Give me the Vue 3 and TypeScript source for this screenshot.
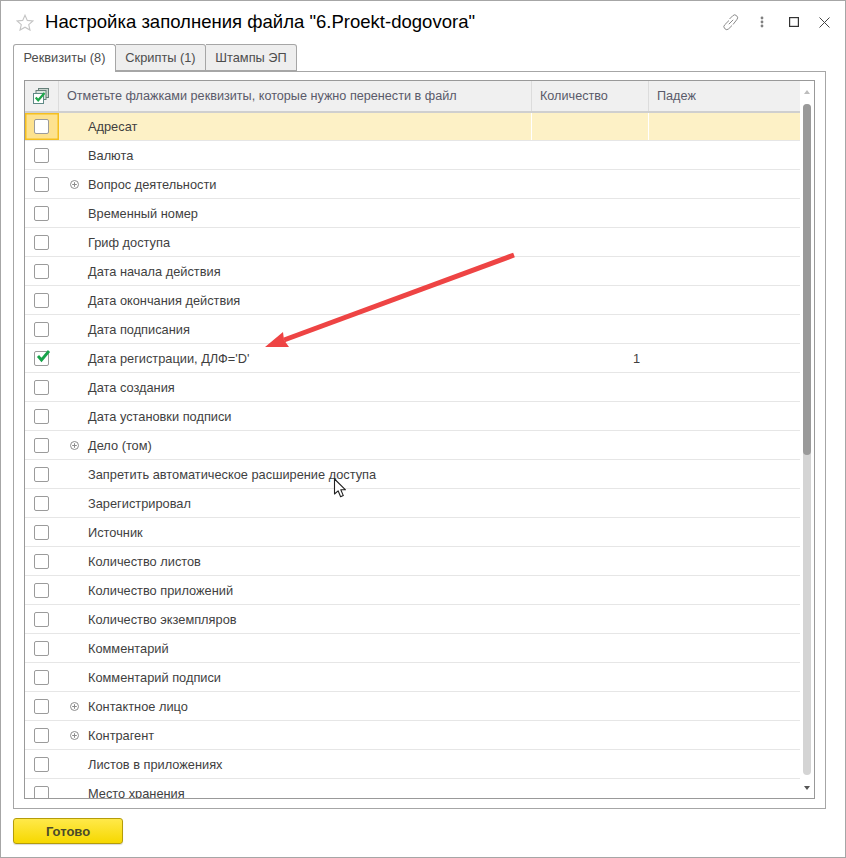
<script setup lang="ts">
interface Row { name: string; expand?: boolean; checked?: boolean; qty?: string; current?: boolean }
const rows: Row[] = [
  { name: 'Адресат', current: true },
  { name: 'Валюта' },
  { name: 'Вопрос деятельности', expand: true },
  { name: 'Временный номер' },
  { name: 'Гриф доступа' },
  { name: 'Дата начала действия' },
  { name: 'Дата окончания действия' },
  { name: 'Дата подписания' },
  { name: "Дата регистрации, ДЛФ='D'", checked: true, qty: '1' },
  { name: 'Дата создания' },
  { name: 'Дата установки подписи' },
  { name: 'Дело (том)', expand: true },
  { name: 'Запретить автоматическое расширение доступа' },
  { name: 'Зарегистрировал' },
  { name: 'Источник' },
  { name: 'Количество листов' },
  { name: 'Количество приложений' },
  { name: 'Количество экземпляров' },
  { name: 'Комментарий' },
  { name: 'Комментарий подписи' },
  { name: 'Контактное лицо', expand: true },
  { name: 'Контрагент', expand: true },
  { name: 'Листов в приложениях' },
  { name: 'Место хранения' },
]
const tabs = ['Реквизиты (8)', 'Скрипты (1)', 'Штампы ЭП']
</script>

<template>
  <div class="window">
    <header class="titlebar">
      <svg class="star" width="18" height="17" viewBox="0 0 18 17">
        <path d="M9 1.200l2.300 5.200 5.600.5-4.200 3.700 1.300 5.500L9 13.200l-5 2.900 1.300-5.500L1.100 6.900l5.600-.5z" fill="#fff" stroke="#c4c4c4" stroke-width="1.100" />
      </svg>
      <h1 class="title">Настройка заполнения файла "6.Proekt-dogovora"</h1>
      <div class="actions">
        <svg width="18" height="18" viewBox="0 0 18 18" fill="none" stroke="#8a8a8a" stroke-width="1">
          <path d="M7.500 6l3.300-3.300a2.700 2.700 0 0 1 3.800 0l.2.2a2.700 2.700 0 0 1 0 3.800L11 11.500" />
          <path d="M10 12.500l-3.300 3.300a2.700 2.700 0 0 1-3.800 0l-.2-.2a2.700 2.700 0 0 1 0-3.800L7 7.500" />
          <path d="M6.800 11.200l4.400-4.400" />
        </svg>
        <svg width="4" height="12" viewBox="0 0 4 12" fill="#808080">
          <circle cx="2" cy="2" r="1.400" /><circle cx="2" cy="6" r="1.400" /><circle cx="2" cy="10" r="1.400" />
        </svg>
        <svg width="10" height="10" viewBox="0 0 10 10" fill="none" stroke="#333" stroke-width="1.200">
          <rect x=".6" y=".6" width="8.800" height="8.800" />
        </svg>
        <svg width="11" height="11" viewBox="0 0 11 11" fill="none" stroke="#444" stroke-width="1">
          <path d="M.5.500l10 10M10.500.500l-10 10" />
        </svg>
      </div>
    </header>

    <nav class="tabs">
      <div v-for="(t, i) in tabs" :key="t" class="tab" :class="{ active: i === 0 }">{{ t }}</div>
    </nav>

    <section class="panel">
      <div class="table">
        <div class="content">
          <div class="thead">
            <div class="th th-check">
              <svg width="16" height="16" viewBox="0 0 16 16">
                <rect x="5.500" y=".5" width="10" height="9" fill="#c9d6cf" stroke="#66807a" />
                <rect x="3" y="2.500" width="10" height="9" fill="#dbe5df" stroke="#66807a" />
                <rect x=".5" y="5.500" width="10" height="10" fill="#fff" stroke="#5f8a86" />
                <path d="M2.700 9.500l2.500 2.800L11.500 5" fill="none" stroke="#1da84a" stroke-width="2.200" />
              </svg>
            </div>
            <div class="th th-name">Отметьте флажками реквизиты, которые нужно перенести в файл</div>
            <div class="th th-qty">Количество</div>
            <div class="th th-case">Падеж</div>
          </div>
          <div v-for="r in rows" :key="r.name" class="row" :class="{ current: r.current }">
            <div class="cell-check">
              <span class="box">
                <svg v-if="r.checked" class="tick" width="18" height="16" viewBox="0 0 18 16">
                  <path d="M4 8l3.500 4L15 3" fill="none" stroke="#17a34a" stroke-width="2.800" />
                </svg>
              </span>
            </div>
            <div class="cell-name">
              <span class="expander">
                <svg v-if="r.expand" width="9" height="9" viewBox="0 0 9 9" fill="none" stroke="#8c8c8c">
                  <circle cx="4.500" cy="4.500" r="4" />
                  <path d="M2.200 4.500h4.600M4.500 2.200v4.600" />
                </svg>
              </span>
              <span class="label">{{ r.name }}</span>
            </div>
            <div class="cell-qty">{{ r.qty }}</div>
            <div class="cell-case"></div>
          </div>
        </div>
        <div class="scrollbar">
          <span class="arrow up"></span>
          <div class="track"><div class="thumb"></div></div>
          <span class="arrow down"></span>
        </div>
      </div>
    </section>

    <footer class="footer">
      <button class="done" type="button">Готово</button>
    </footer>

    <svg class="annotation" width="270" height="110" viewBox="0 0 270 110">
      <path d="M258 14L28 99" stroke="#ee4444" stroke-width="5" fill="none" />
      <path d="M9 106L27 91L28 99L33 106Z" fill="#ee4444" />
    </svg>
    <svg class="cursor" width="14" height="21" viewBox="0 0 14 21">
      <path d="M1.500 1v15l3.600-3.200 2.500 6 2.700-1.200-2.500-5.800h4.700z" fill="#fff" stroke="#222" stroke-width="1.100" stroke-linejoin="round" />
    </svg>
  </div>
</template>

<style>
html, body { margin: 0; background: #fff; }
</style>

<style scoped>
.window {
  position: relative;
  box-sizing: border-box;
  width: 846px;
  height: 858px;
  border: 1px solid #a6a6a6;
  background: #fff;
  font-family: "Liberation Sans", Arial, sans-serif;
  font-size: 12.8px;
  color: #4b4b4b;
  overflow: hidden;
  display: flex;
  flex-direction: column;
}
.titlebar {
  height: 43px;
  flex: none;
  display: flex;
  align-items: center;
  padding: 0 15px;
}
.star { flex: none; margin-right: 11px; margin-top: -1px; }
.title {
  margin: 0;
  flex: 1;
  font-size: 18.55px;
  font-weight: 400;
  color: #000;
  white-space: nowrap;
  margin-top: -1px;
}
.actions { display: flex; align-items: center; margin-top: -1px; }
.actions svg:nth-child(1) { margin-right: 20px; }
.actions svg:nth-child(2) { margin-right: 25px; }
.actions svg:nth-child(3) { margin-right: 20px; }
.tabs {
  display: flex;
  padding-left: 12px;
  height: 27px;
  flex: none;
  position: relative;
  z-index: 1;
}
.tab {
  box-sizing: border-box;
  width: 90px;
  height: 27px;
  text-align: center;
  line-height: 26px;
  background: #eeeeee;
  border: 1px solid #a6a6a6;
  border-left-width: 0;
  border-radius: 0 3px 0 0;
  color: #4d4d4d;
  white-space: nowrap;
}
.tab:last-child { width: 91px; }
.tab.active {
  width: 103px;
  height: 28px;
  background: #fff;
  border-left-width: 1px;
  border-bottom: 0;
  border-radius: 3px 3px 0 0;
}
.panel {
  box-sizing: border-box;
  margin: 0 0 0 12px;
  width: 813px;
  height: 738px;
  flex: none;
  border: 1px solid #a6a6a6;
  padding: 8px 10px 9px 10px;
}
.table {
  position: relative;
  box-sizing: border-box;
  height: 719px;
  border: 1px solid #999;
  overflow: hidden;
}
.content { width: 775px; }
.thead {
  display: grid;
  grid-template-columns: 34px 473px 117px 151px;
  height: 30px;
  background: #f0f0f0;
  border-bottom: 2px solid #cfcfcf;
}
.th {
  display: flex;
  align-items: center;
  padding-left: 8px;
  box-sizing: border-box;
  color: #5a5a6a;
  font-size: 12.65px;
  border-right: 1px solid #dcdcdc;
  white-space: nowrap;
}
.th:last-child { border-right: 0; }
.th-check { padding-left: 8px; }
.row {
  display: grid;
  grid-template-columns: 34px 473px 117px 151px;
  height: 28px;
  border-bottom: 1px solid #e6e6e6;
  align-items: stretch;
}
.thead + .row { height: 27px; }
.row > div { display: flex; align-items: center; }
.row.current .cell-name,
.row.current .cell-qty,
.row.current .cell-case { background: #fdf1c6; }
.row.current .cell-name,
.row.current .cell-qty { border-right: 1px solid #fff; box-sizing: border-box; }
.row.current .cell-check {
  background: #fde28f;
  box-shadow: inset 0 0 0 1.500px #f5bf1f;
}
.cell-check { padding-left: 9px; box-sizing: border-box; }
.box {
  position: relative;
  display: block;
  box-sizing: border-box;
  width: 15px;
  height: 15px;
  border: 1px solid #9b9b9b;
  border-radius: 2px;
  background: #fff;
}
.tick { position: absolute; left: -1px; top: -4px; }
.cell-name { padding-left: 11px; }
.expander { width: 18px; flex: none; display: flex; align-items: center; }
.label { color: #3f3f3f; white-space: nowrap; }
.cell-qty {
  justify-content: flex-end;
  padding-right: 9px;
  box-sizing: border-box;
  color: #3f3f3f;
}
.scrollbar {
  position: absolute;
  right: 0;
  top: 0;
  bottom: 0;
  width: 13px;
  background: #fff;
}
.arrow {
  position: absolute;
  left: 3px;
  width: 0;
  height: 0;
  border-left: 3.500px solid transparent;
  border-right: 3.500px solid transparent;
}
.arrow.up { top: 9px; border-bottom: 4px solid #bdbdbd; }
.arrow.down { bottom: 8px; border-top: 4px solid #555; }
.track {
  position: absolute;
  left: 2px;
  top: 23px;
  width: 8px;
  height: 671px;
  background: #d4d4d4;
  border-radius: 4px;
}
.thumb {
  width: 8px;
  height: 351px;
  background: #9a9a9a;
  border-radius: 4px;
}
.footer { padding: 9px 0 0 12px; }
.done {
  box-sizing: border-box;
  display: block;
  width: 110px;
  height: 26px;
  padding: 0;
  border: 1px solid #b49c0a;
  border-radius: 3px;
  background: linear-gradient(#ffe94a, #f6d800);
  color: #4a4a2a;
  font-family: inherit;
  font-size: 13px;
  font-weight: 700;
  box-shadow: 0 1px 1px rgba(0,0,0,.15);
}
.annotation { position: absolute; left: 255px; top: 240px; pointer-events: none; }
.cursor { position: absolute; left: 332px; top: 477px; pointer-events: none; }
</style>
